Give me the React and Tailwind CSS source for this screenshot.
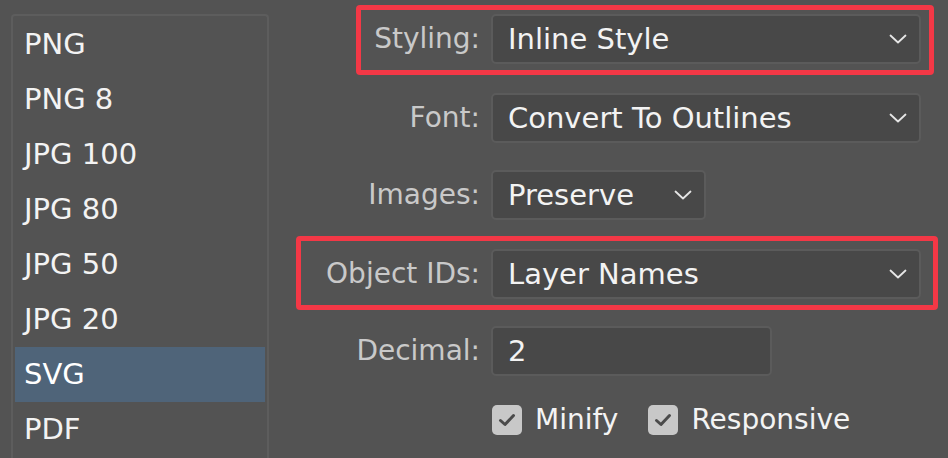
import React from "react";

const font = { fontFamily: '"DejaVu Sans", "Open Sans", sans-serif' };

function Chevron() {
  return (
    <svg width="18" height="10" viewBox="0 0 18 10" className="shrink-0">
      <path d="M1.5 1.5 L9 8.5 L16.5 1.5" fill="none" stroke="#e6e6e6" strokeWidth="1.8" strokeLinecap="round" strokeLinejoin="round" />
    </svg>
  );
}

function Select({ value, width }) {
  return (
    <div className={`h-[50px] ${width} rounded-[5px] border-2 border-[#5b5b5b] bg-[#484848] flex items-center pl-[15px] pr-[12px] justify-between`}>
      <span className="text-[29px] text-[#f3f3f3] leading-none">{value}</span>
      <Chevron />
    </div>
  );
}

function Label({ children }) {
  return (
    <div className="w-[211px] pr-[11px] flex justify-end text-[28px] text-[#c9c9c9] leading-none">
      {children}
    </div>
  );
}

function Check({ label }) {
  return (
    <div className="flex items-center gap-[13px]">
      <div className="w-[30px] h-[30px] rounded-[5px] bg-[#c8c8c8] flex items-center justify-center">
        <svg width="18" height="14" viewBox="0 0 18 14">
          <path d="M2.5 7.5 L7 11.5 L15.5 2.5" fill="none" stroke="#4b4b4b" strokeWidth="3" strokeLinecap="round" strokeLinejoin="round" />
        </svg>
      </div>
      <span className="text-[28px] text-[#f3f3f3] leading-none">{label}</span>
    </div>
  );
}

const items = ["PNG", "PNG 8", "JPG 100", "JPG 80", "JPG 50", "JPG 20", "SVG", "PDF"];

export default function App() {
  return (
    <div style={font} className="w-[948px] h-[458px] bg-[#535353] overflow-hidden flex">
      <div className="ml-[11px] mt-[14px] w-[258px] h-[460px] border-2 border-b-0 border-[#5d5d5d] rounded-t-[4px] pt-[1px] px-[2px] shrink-0">
        {items.map((it) => (
          <div
            key={it}
            className={`h-[55px] flex items-center pl-[9px] text-[29px] leading-none ${it === "SVG" ? "bg-[#4f6479] text-white" : "text-[#f3f3f3]"}`}
          >
            {it}
          </div>
        ))}
      </div>
      <div className="flex flex-col ml-[11px] pt-[14px] w-[660px]">
        <div className="relative flex items-center">
          <div className="absolute left-[76px] -top-[9px] w-[578px] h-[70px] border-[5px] border-[#f33846] rounded-[4px]" />
          <Label>Styling:</Label>
          <Select value="Inline Style" width="w-[430px]" />
        </div>
        <div className="flex items-center mt-[29px]">
          <Label>Font:</Label>
          <Select value="Convert To Outlines" width="w-[430px]" />
        </div>
        <div className="flex items-center mt-[27px]">
          <Label>Images:</Label>
          <Select value="Preserve" width="w-[215px]" />
        </div>
        <div className="relative flex items-center mt-[29px]">
          <div className="absolute left-[16px] -top-[13px] w-[642px] h-[74px] border-[5px] border-[#f33846] rounded-[4px]" />
          <Label>Object IDs:</Label>
          <Select value="Layer Names" width="w-[430px]" />
        </div>
        <div className="flex items-center mt-[27px]">
          <Label>Decimal:</Label>
          <div className="h-[50px] w-[281px] rounded-[5px] border-2 border-[#5b5b5b] bg-[#484848] flex items-center pl-[15px]">
            <span className="text-[29px] text-[#f3f3f3] leading-none">2</span>
          </div>
        </div>
        <div className="flex items-center mt-[29px] pl-[212px] gap-[30px]">
          <Check label="Minify" />
          <Check label="Responsive" />
        </div>
      </div>
    </div>
  );
}
